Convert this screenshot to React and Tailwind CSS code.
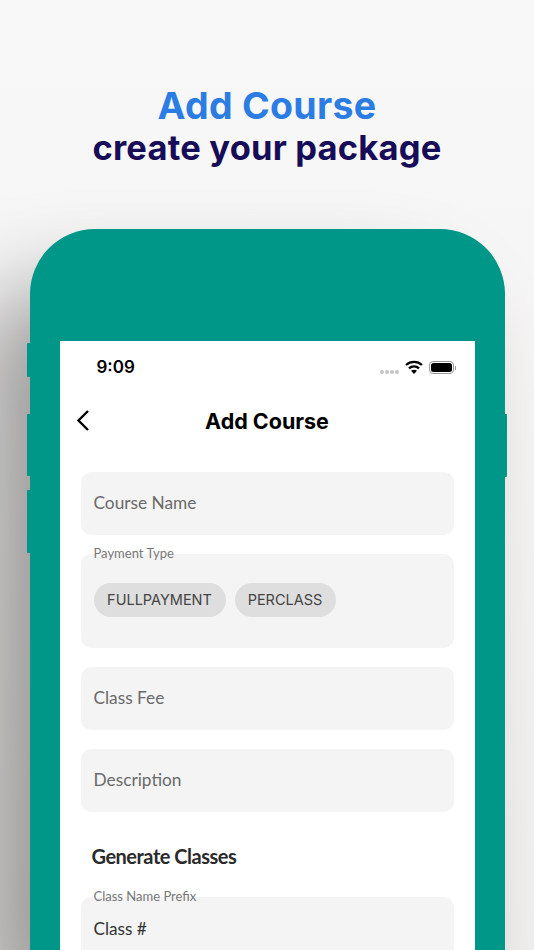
import React from 'react'

const Field = ({ label, value, placeholder, className = '', children }) => (
  <div className={`relative rounded-[10px] bg-[#f4f4f4] px-[13px] ${className}`}>
    {label && (
      <span className="absolute left-[13px] top-[-10px] text-[13px] leading-[18px] text-[#777]">{label}</span>
    )}
    {placeholder && <div className="pt-[19px] text-[17.3px] leading-[24px] text-[#6a6a6a]">{placeholder}</div>}
    {value && <div className="pt-[20px] text-[17.2px] leading-[24px] text-[#333]">{value}</div>}
    {children}
  </div>
)

const Chip = ({ children, className = '' }) => (
  <div className={`flex h-[34px] items-center justify-center rounded-full bg-[#dedede] font-['Inter',sans-serif] text-[14.5px] text-[#444] ${className}`}>
    {children}
  </div>
)

const StatusIcons = () => (
  <div className="flex items-center">
    <div className="mt-[9px] mr-[6px] flex gap-[1.5px]">
      <span className="h-[3.5px] w-[3.5px] rounded-full bg-[#c4c4c4]" />
      <span className="h-[3.5px] w-[3.5px] rounded-full bg-[#c4c4c4]" />
      <span className="h-[3.5px] w-[3.5px] rounded-full bg-[#c4c4c4]" />
      <span className="h-[3.5px] w-[3.5px] rounded-full bg-[#c4c4c4]" />
    </div>
    <svg className="-mt-[2px]" width="18" height="14" viewBox="0 0 18 14" fill="none" stroke="black" strokeWidth="2.3">
      <path d="M1 5 C5.5 0.8 12.5 0.8 17 5" />
      <path d="M4 8.4 C6.8 5.7 11.2 5.7 14 8.4" />
      <path d="M9 14 L6 10.8 C7.8 9.4 10.2 9.4 12 10.8 Z" fill="black" stroke="none" />
    </svg>
    <div className="ml-[6px] flex h-[13px] w-[25px] items-center rounded-[4px] border border-[#999] p-[1px]">
      <div className="h-full w-full rounded-[2.5px] bg-black" />
    </div>
    <div className="ml-[1px] h-[4px] w-[1px] bg-[#999]" />
  </div>
)

export default function App() {
  return (
    <div className="flex h-[950px] w-[534px] flex-col items-center overflow-hidden bg-gradient-to-b from-[#f8f8f8] to-[#f2f0ee] font-['Lato',sans-serif]">
      <div className="pt-[83px] text-center font-['Inter',sans-serif] font-bold">
        <h1 className="text-[37.5px] leading-[46px] tracking-[0.3px] text-[#2b7de4]">Add Course</h1>
        <h2 className="text-[34.5px] leading-[38px] tracking-[0.2px] text-[#160c58]">create your package</h2>
      </div>

      <div className="relative mt-[62px] w-[475px] flex-1 rounded-t-[65px] bg-[#009688] px-[30px] pt-[112px] shadow-[-50px_60px_90px_rgba(0,0,0,0.36)]">
        {/* side buttons */}
        <div className="absolute left-[-3px] top-[114px] h-[34px] w-[3px] rounded-l-[1px] bg-[#009688]" />
        <div className="absolute left-[-3px] top-[185px] h-[62px] w-[3px] rounded-l-[1px] bg-[#009688]" />
        <div className="absolute left-[-3px] top-[261px] h-[63px] w-[3px] rounded-l-[1px] bg-[#009688]" />
        <div className="absolute right-[-2px] top-[185px] h-[63px] w-[2px] rounded-r-[1px] bg-[#009688]" />

        <div className="h-full bg-white px-[21px]">
          <div className="-mx-[21px] flex h-[52px] items-center justify-between pl-[37px] pr-[19px] pt-[1px]">
            <span className="font-['Inter',sans-serif] text-[17px] font-semibold text-black">9:09</span>
            <StatusIcons />
          </div>

          <div className="relative mt-[10px] flex h-[36px] items-center justify-center">
            <svg className="absolute left-[-6px] top-[6px]" width="16" height="24" viewBox="0 0 16 24" fill="none" stroke="black" strokeWidth="2.4">
              <path d="M13 2 L3.5 11.5 L13 21" />
            </svg>
            <span className="font-['Inter',sans-serif] text-[21.5px] font-bold text-black">Add Course</span>
          </div>

          <div className="mt-[33px] flex flex-col gap-[19px]">
            <Field placeholder="Course Name" className="h-[63px]" />
            <Field label="Payment Type" className="flex h-[94px] gap-[9px] pt-[29px]">
              <Chip className="w-[132px]">FULLPAYMENT</Chip>
              <Chip className="w-[101px]">PERCLASS</Chip>
            </Field>
            <Field placeholder="Class Fee" className="h-[63px]" />
            <Field placeholder="Description" className="h-[63px]" />
          </div>

          <div className="mt-[30px] pl-[11px] text-[20px] font-bold leading-[28px] tracking-[-0.5px] text-[#2a2a2a]">
            Generate Classes
          </div>

          <Field label="Class Name Prefix" value="Class #" className="mt-[27px] h-[63px]" />
        </div>
      </div>
    </div>
  )
}
